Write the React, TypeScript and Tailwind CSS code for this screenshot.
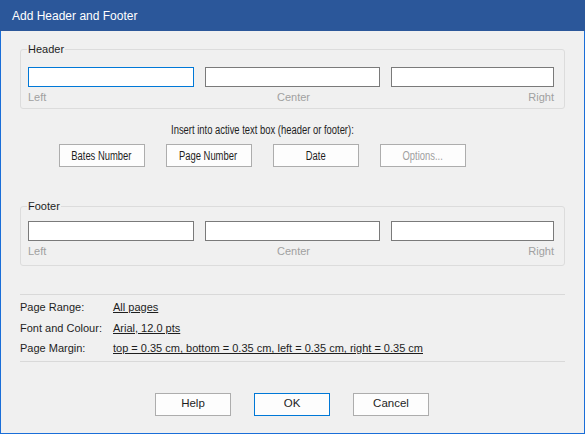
import React from "react";

const sans = "font-['Liberation_Sans',Arial,sans-serif]";

function Input({ w, focused }: { w: string; focused?: boolean }) {
  return (
    <div
      className={`${w} h-[20px] bg-white border ${focused ? "border-[#0078d7]" : "border-[#7a7a7a]"}`}
    />
  );
}

function Group({ title, top, bottom }: { title: string; top: string; bottom: string }) {
  return (
    <div className={`relative mx-[19px] rounded-[3px] border border-[#dcdcdc] ${top} ${bottom}`}>
      <span className={`absolute -top-[8px] left-[6px] bg-[#f0f0f0] px-[1px] text-[11px] leading-[14px] text-[#1e1e1e] ${sans}`}>
        {title}
      </span>
      <div className="flex gap-[11px] pl-[7px]">
        <Input w="w-[166px]" focused={title === "Header"} />
        <Input w="w-[175px]" />
        <Input w="w-[163px]" />
      </div>
      <div className={`relative mt-[3px] h-[14px] w-[526px] pl-[7px] text-[11px] leading-[14px] text-[#a0a0a0] ${sans}`}>
        <span className="absolute left-[7px]">Left</span>
        <span className="absolute left-[185px] w-[175px] text-center">Center</span>
        <span className="absolute right-[-7px]">Right</span>
      </div>
    </div>
  );
}

function Btn({ label, w, disabled, primary, narrow }: { label: string; w: string; disabled?: boolean; primary?: boolean; narrow?: boolean }) {
  return (
    <div
      className={`${w} h-[23px] flex items-center justify-center bg-[#fdfdfd] border ${primary ? "border-[#0078d7]" : "border-[#adadad]"} ${narrow ? "text-[12px]" : "text-[11.5px]"} ${sans} ${disabled ? "text-[#a0a0a0]" : "text-[#1e1e1e]"}`}
    >
      <span className={`inline-block whitespace-nowrap ${narrow ? "scale-x-[0.785]" : ""}`}>{label}</span>
    </div>
  );
}

export default function App() {
  return (
    <div className="w-[585px] h-[434px] flex flex-col bg-[#f0f0f0]">
      <div className={`h-[31px] shrink-0 bg-[#2b579a] pl-[12px] flex items-center text-white text-[12px] ${sans}`}>
        Add Header and Footer
      </div>
      <div className="flex-1 border-x border-b border-[#1a6ed8] flex flex-col">
        <Group title="Header" top="mt-[18px] pt-[17px]" bottom="pb-[4px]" />
        <div className="ml-[57px] w-[408px] flex flex-col items-center mt-[14px]">
          <div className={`whitespace-nowrap text-[12px] leading-[14px] text-[#1e1e1e] ${sans}`}>
            <span className="inline-block scale-x-[0.785]">Insert into active text box (header or footer):</span>
          </div>
          <div className="mt-[7px] flex gap-[21px]">
            <Btn label="Bates Number" w="w-[86px]" narrow />
            <Btn label="Page Number" w="w-[86px]" narrow />
            <Btn label="Date" w="w-[86px]" narrow />
            <Btn label="Options..." w="w-[86px]" narrow disabled />
          </div>
        </div>
        <Group title="Footer" top="mt-[39px] pt-[14px]" bottom="pb-[7px]" />
        <div className="mx-[19px] mt-[28px] border-t border-[#d9d9d9]" />
        <div className={`mx-[19px] mt-[2px] flex flex-col text-[11px] leading-[20.5px] text-[#1e1e1e] ${sans}`}>
          <div className="flex">
            <span className="w-[93px]">Page Range:</span>
            <span className="underline">All pages</span>
          </div>
          <div className="flex">
            <span className="w-[93px]">Font and Colour:</span>
            <span className="underline">Arial, 12.0 pts</span>
          </div>
          <div className="flex">
            <span className="w-[93px]">Page Margin:</span>
            <span className="underline">top = 0.35 cm, bottom = 0.35 cm, left = 0.35 cm, right = 0.35 cm</span>
          </div>
        </div>
        <div className="mx-[19px] mt-[2px] border-t border-[#d9d9d9]" />
        <div className="mt-[31px] ml-[154px] flex gap-[23px]">
          <Btn label="Help" w="w-[76px]" />
          <Btn label="OK" w="w-[76px]" primary />
          <Btn label="Cancel" w="w-[76px]" />
        </div>
      </div>
    </div>
  );
}
